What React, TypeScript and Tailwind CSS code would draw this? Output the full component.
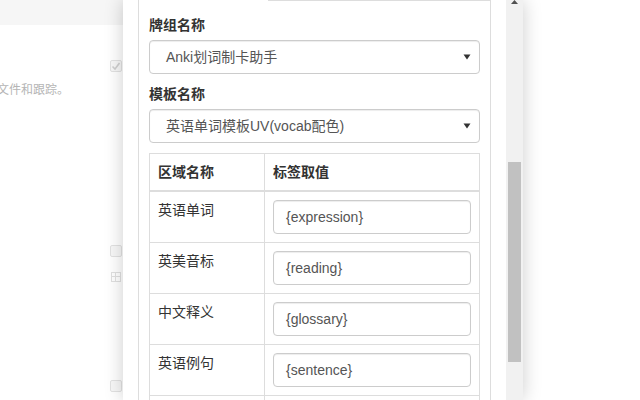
import React from "react";

const font = { fontFamily: '"Liberation Sans", "Noto Sans CJK SC", sans-serif' };

function Caret() {
  return (
    <svg width="8" height="6" viewBox="0 0 8 6" className="shrink-0">
      <path d="M0.5 0.5 L7.5 0.5 L4 5.5 Z" fill="#333" />
    </svg>
  );
}

function SelectBox({ value }: { value: string }) {
  return (
    <div className="flex h-[34px] items-center rounded-[4px] border border-[#ccc] bg-white pl-[16px] pr-[8px] shadow-[inset_0_1px_1px_rgba(0,0,0,0.075)]">
      <span className="flex-1 text-[14px] text-[#555]">{value}</span>
      <Caret />
    </div>
  );
}

function FauxCheck({ checked }: { checked?: boolean }) {
  return (
    <div className="flex h-[12px] w-[12px] items-center justify-center rounded-[2px] border border-[#e2e2e2] bg-[#f7f7f7]">
      {checked && (
        <svg width="10" height="10" viewBox="0 0 10 10">
          <path d="M1.5 5.5 L4 8 L8.5 2" stroke="#cfcfcf" strokeWidth="1.6" fill="none" />
        </svg>
      )}
    </div>
  );
}

const rows = [
  ["英语单词", "{expression}"],
  ["英美音标", "{reading}"],
  ["中文释义", "{glossary}"],
  ["英语例句", "{sentence}"],
  ["", ""],
];

export default function App() {
  return (
    <div className="flex h-[400px] w-[640px] overflow-hidden bg-white" style={font}>
      {/* page behind, left */}
      <div className="flex w-[123px] shrink-0 flex-col">
        <div className="h-[25px] bg-[#f6f6f6]" />
        <div className="mt-[35px] flex justify-end pr-[1px]">
          <FauxCheck checked />
        </div>
        <div className="-ml-[3px] mt-[10px] whitespace-nowrap text-[12px] leading-[16px] text-[#b5b5b5]">
          文件和跟踪。
        </div>
        <div className="mt-[147px] flex justify-end pr-[1px]">
          <FauxCheck />
        </div>
        <div className="mt-[15px] flex justify-end pr-[2px]">
          <div className="grid h-[10px] w-[10px] grid-cols-2 grid-rows-2 border border-[#e0e0e0]">
            <div className="border-b border-r border-[#e0e0e0]" />
            <div className="border-b border-[#e0e0e0]" />
            <div className="border-r border-[#e0e0e0]" />
            <div />
          </div>
        </div>
        <div className="mt-[98px] flex justify-end pr-[1px]">
          <FauxCheck />
        </div>
      </div>

      {/* popup */}
      <div className="relative z-10 flex w-[400px] shrink-0 bg-white shadow-[0_0_18px_rgba(0,0,0,0.2)]">
        <div className="flex w-[383px] flex-col pl-[15px] pr-[15px]">
          {/* tab header tail */}
          <div className="flex h-[5px]">
            <div className="w-[131px] border-x border-[#ddd]" />
            <div className="flex-1 border-b border-r border-[#ddd]" />
          </div>
          {/* tab panel */}
          <div className="flex flex-1 flex-col border-x border-[#ddd] px-[10px] pt-[14px]">
            <div className="mb-[5px] text-[14px] font-bold leading-[20px] text-[#333]">牌组名称</div>
            <SelectBox value="Anki划词制卡助手" />
            <div className="mb-[5px] mt-[10px] text-[14px] font-bold leading-[20px] text-[#333]">模板名称</div>
            <SelectBox value="英语单词模板UV(vocab配色)" />
            <div className="mt-[10px] border border-[#ddd]">
              <div className="flex border-b-2 border-[#ddd]">
                <div className="w-[115px] border-r border-[#ddd] p-[8px] text-[14px] font-bold leading-[20px] text-[#333]">
                  区域名称
                </div>
                <div className="flex-1 p-[8px] text-[14px] font-bold leading-[20px] text-[#333]">标签取值</div>
              </div>
              {rows.map(([k, v], i) => (
                <div key={i} className={`flex ${i > 0 ? "border-t border-[#ddd]" : ""}`}>
                  <div className="w-[115px] border-r border-[#ddd] p-[8px] text-[14px] leading-[20px] text-[#333]">
                    {k}
                  </div>
                  <div className="flex-1 p-[8px]">
                    <div className="flex h-[34px] items-center rounded-[4px] border border-[#ccc] px-[12px] text-[14px] text-[#555] shadow-[inset_0_1px_1px_rgba(0,0,0,0.075)]">
                      {v}
                    </div>
                  </div>
                </div>
              ))}
            </div>
          </div>
        </div>
        {/* scrollbar */}
        <div className="flex w-[17px] flex-col items-center bg-[#f1f1f1]">
          <svg width="9" height="4" viewBox="0 0 9 4">
            <path d="M1 4 L4.5 0 L8 4 Z" fill="#505050" />
          </svg>
          <div className="mt-[158px] h-[200px] w-[13px] bg-[#c1c1c1]" />
        </div>
      </div>

      <div className="flex-1" />
    </div>
  );
}
